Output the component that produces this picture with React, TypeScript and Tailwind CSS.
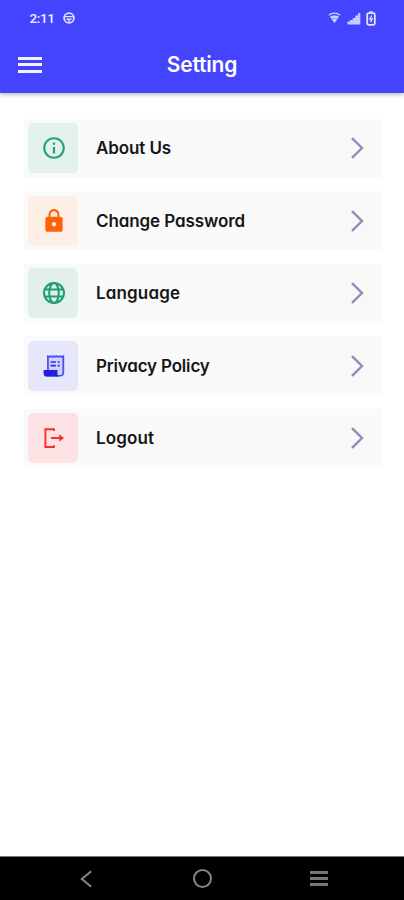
import React from 'react';

interface SettingItem {
    label: string;
    tileClass: string;
    labelClass: string;
    icon: React.ReactNode;
}

const InfoIcon = () => (
    <svg className="h-[26px] w-[26px]" viewBox="0 0 24 24" fill="#25a078">
        <path d="M11 7h2v2h-2zm0 4h2v6h-2zm1-9C6.48 2 2 6.48 2 12s4.48 10 10 10 10-4.48 10-10S17.52 2 12 2zm0 18c-4.41 0-8-3.59-8-8s3.59-8 8-8 8 3.59 8 8-3.59 8-8 8z" />
    </svg>
);

const LockIcon = () => (
    <svg className="h-[26px] w-[26px]" viewBox="0 0 24 24" fill="#ff6207">
        <path d="M18 8h-1V6c0-2.76-2.24-5-5-5S7 3.24 7 6v2H6c-1.1 0-2 .9-2 2v10c0 1.1.9 2 2 2h12c1.1 0 2-.9 2-2V10c0-1.1-.9-2-2-2zm-6 9c-1.1 0-2-.9-2-2s.9-2 2-2 2 .9 2 2-.9 2-2 2zm3.1-9H8.9V6c0-1.71 1.39-3.1 3.1-3.1s3.1 1.39 3.1 3.1v2z" />
    </svg>
);

const GlobeIcon = () => (
    <svg className="h-[26px] w-[26px]" viewBox="0 0 24 24" fill="none" stroke="#1f9d72" strokeWidth="1.9">
        <circle cx="12" cy="12" r="9.2" />
        <ellipse cx="12" cy="12" rx="4.4" ry="9.2" />
        <path d="M3.8 8.7h16.4M3.8 15.3h16.4" />
    </svg>
);

const PolicyIcon = () => (
    <svg className="h-[26px] w-[26px]" viewBox="0 0 24 24">
        <path d="M6.4 16V3l1.3.6L9 3l1.4.6 1.4-.6 1.4.6 1.4-.6 1.4.6 1.4-.6 1.3.6 1.9-.6v15.5a2.5 2.5 0 0 1-2.5 2.5H5.5" fill="#cfcffb" stroke="#4a4af0" strokeWidth="1.6" />
        <path d="M2.4 15.8h12.8v3.4c0 1.2.7 2.2 1.9 2.6H5.4a3 3 0 0 1-3-2.7z" fill="#2020dc" />
        <path d="M8.8 8.3h5M8.8 11.6h5M15.4 8.3h1.8M15.4 11.6h1.8" stroke="#3030e4" strokeWidth="1.6" />
    </svg>
);

const LogoutIcon = () => (
    <svg className="h-6 w-6" viewBox="0 0 24 24" fill="none" stroke="#fb2c2f" strokeWidth="1.9">
        <path d="M12 3.2H3.4v17.8H12M12 2.4v2.6M12 19.2v2.6M9 12h9" />
        <path d="M17.2 8.3 22 12l-4.8 3.7z" fill="#fb2c2f" stroke="none" />
    </svg>
);

const items: SettingItem[] = [
    { label: 'About Us', tileClass: 'bg-[#e4f2ee]', labelClass: 'tracking-[-0.1px]', icon: <InfoIcon /> },
    { label: 'Change Password', tileClass: 'bg-[#fdeee6]', labelClass: 'tracking-[-0.09px]', icon: <LockIcon /> },
    { label: 'Language', tileClass: 'bg-[#e2f0ec]', labelClass: 'tracking-[0.15px]', icon: <GlobeIcon /> },
    { label: 'Privacy Policy', tileClass: 'bg-[#e7e7fc]', labelClass: 'tracking-[-0.18px]', icon: <PolicyIcon /> },
    { label: 'Logout', tileClass: 'bg-[#fce2e3]', labelClass: 'tracking-[0.15px]', icon: <LogoutIcon /> },
];

const StatusBar = () => (
    <div className="flex h-9 items-center pl-[29.5px] pr-7">
        <span className="w-[25px] font-[Roboto] text-[13.5px] font-medium tracking-[-0.4px] text-[#eeeeff]">2:11</span>
        <svg className="ml-2 h-3 w-3" viewBox="0 0 12 12" fill="none" stroke="#dfdfff">
            <circle cx="6" cy="6" r="4.9" strokeWidth="1.8" />
            <path d="M2 4.6h8M3.5 7.2h5M6 7v3" strokeWidth="1.4" />
        </svg>
        <svg className="ml-auto h-3 w-[13px]" viewBox="0 0 13 12" fill="none" stroke="#d3d3ff">
            <path d="M.8 3.2c3.4-2.6 8-2.6 11.4 0" strokeWidth="1.2" />
            <path d="M2 5c2.7-1.9 6.3-1.9 9 0L6.5 11z" fill="#d3d3ff" stroke="none" />
            <path d="M3.5 6.4h6" stroke="#7777ff" strokeWidth=".8" />
        </svg>
        <svg className="ml-[6px] h-[13px] w-[14px]" viewBox="0 0 14 13" fill="#c9c9ff">
            <path d="M.5 9.5h2.6v3H.5zM3 8h2.7v4.5H3zM5.7 6h2.6v6.5H5.7zM8.3 3.5H11v9H8.3zM11 1h2.3v11.5H11z" />
        </svg>
        <svg className="ml-[5px] h-[15px] w-[10px]" viewBox="0 0 10 15" fill="none" stroke="#e4e4ff">
            <path d="M3.3 1h3.4" strokeWidth="1.6" />
            <rect x="1.2" y="2.2" width="7.6" height="11.6" rx="1.5" strokeWidth="1.8" />
            <path d="M5.8 4.5 3.8 8h2.4l-1.6 3.2" strokeWidth="1.3" />
        </svg>
    </div>
);

const SettingRow: React.FC<{ item: SettingItem }> = ({ item }) => (
    <button type="button" className="flex h-[59px] w-full items-center bg-[#fafafa] pl-[4.4px] pr-[5px] text-left">
        <span className={`flex h-[50px] w-[50px] items-center justify-center rounded-[5px] pl-px ${item.tileClass}`}>{item.icon}</span>
        <span className={`ml-[17.6px] whitespace-nowrap pt-[1.5px] text-[17px] font-semibold text-[#161616] ${item.labelClass}`}>{item.label}</span>
        <span className="ml-auto flex h-10 w-[39px] items-center justify-center bg-[#f8f8f9]">
            <svg className="h-[22px] w-[13px]" viewBox="0 0 13 22" fill="none" stroke="#908db4" strokeWidth="2.4">
                <path d="M1 1.2 11 11 1 20.8" />
            </svg>
        </span>
    </button>
);

export default function App() {
    return (
        <div className="flex h-[900px] w-[404px] flex-col bg-white font-[Inter,sans-serif] [font-feature-settings:'cv11'_1,'ss03'_1]">
            <header className="h-[93px] bg-[#4444ff] shadow-[0_1px_5px_rgba(0,0,0,0.35)]">
                <StatusBar />
                <div className="grid h-[57px] grid-cols-[1fr_auto_1fr] items-center px-[18px]">
                    <button type="button" aria-label="Menu" className="flex w-6 flex-col gap-[3.5px]">
                        <span className="h-[3px] bg-[#f4f4ff]" />
                        <span className="h-[3px] bg-[#f4f4ff]" />
                        <span className="h-[3px] bg-[#f4f4ff]" />
                    </button>
                    <h1 className="text-[21px] font-semibold tracking-[-0.2px] text-white">Setting</h1>
                    <span />
                </div>
            </header>

            <main className="flex flex-1 flex-col gap-[13.6px] pl-6 pr-[22px] pt-[25.5px]">
                {items.map((item) => (
                    <SettingRow key={item.label} item={item} />
                ))}
            </main>

            {/* Android navigation bar */}
            <nav className="grid h-11 grid-cols-[174px_57px_173px] items-center border-t border-[#777] bg-black">
                <svg className="ml-[80px] h-[18px] w-3" viewBox="0 0 12 18" fill="none" stroke="#858585" strokeWidth="2">
                    <path d="M11.2 1.2 1.8 9l9.4 7.8" />
                </svg>
                <span className="mx-auto h-[19px] w-[19px] rounded-full border-2 border-[#858585]" />
                <span className="ml-[79px] flex w-[18px] flex-col gap-[3px]">
                    <span className="h-[3px] bg-[#777]" />
                    <span className="h-[3px] bg-[#777]" />
                    <span className="h-[3px] bg-[#777]" />
                </span>
            </nav>
        </div>
    );
}
